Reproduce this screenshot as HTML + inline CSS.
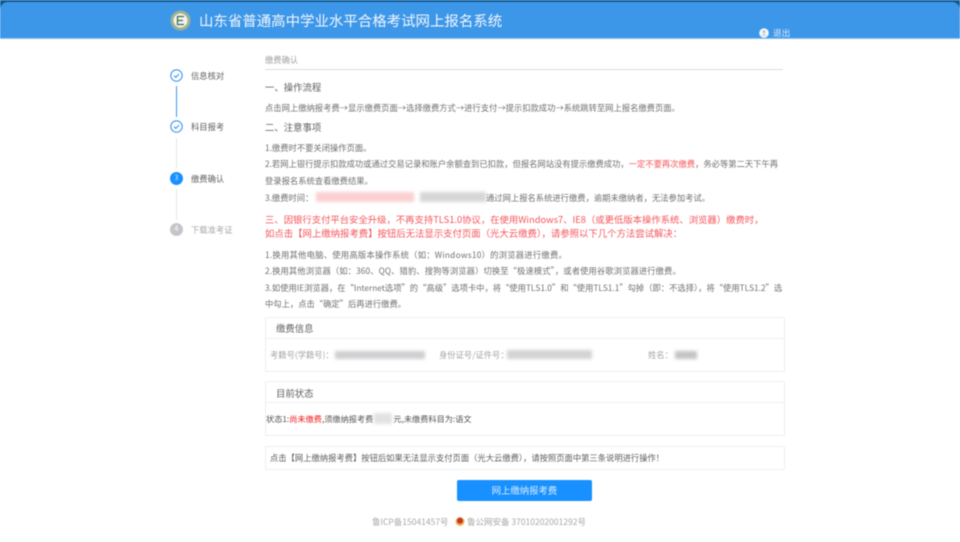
<!DOCTYPE html>
<html lang="zh-CN">
<head>
<meta charset="utf-8">
<title>山东省普通高中学业水平合格考试网上报名系统</title>
<style>
html,body{margin:0;padding:0;background:#fff}
body{width:960px;height:542px;overflow:hidden;position:relative;font-family:"Noto Sans CJK SC","Liberation Sans",sans-serif;color:#666}
#w{position:absolute;inset:0;filter:blur(.4px)}
.t{position:absolute;white-space:nowrap;font-size:8.3px;line-height:12px;color:#707070}
.h{font-size:9.4px;color:#606060}
.r{font-size:9.35px;color:#f4555a}
.box{position:absolute;left:265px;width:518px;background:#fff;border:1px solid #eceef1;border-radius:2px}
.line{position:absolute;left:0;right:0;height:1px;background:#eceef1}
.b{position:absolute;filter:blur(1.6px)}
.c{position:absolute;border-radius:50%;box-sizing:border-box}
</style>
</head>
<body>
<div id="w">
<div style="position:absolute;left:0;top:0;width:960px;height:39px;background:#0f5b96"></div>
<div style="position:absolute;left:0;top:2px;width:960px;height:36px;background:#3d97e9;border-radius:8px 8px 0 0"></div>
<div style="position:absolute;left:0;top:38px;width:960px;height:1px;background:#8fc2f0"></div>

<svg style="position:absolute;left:170px;top:10px" width="21" height="21" viewBox="0 0 21 21">
<circle cx="10.5" cy="10.5" r="10" fill="#9fb08f"/><circle cx="10.5" cy="10.5" r="7" fill="#f3f3ee"/>
<path d="M14 6.5H7.5v8H14M7.5 10.5H13" fill="none" stroke="#3f6d5a" stroke-width="1.3"/>
</svg>
<div class="t" style="left:199px;top:11px;font-size:14.45px;line-height:20px;color:#f2f7fd">山东省普通高中学业水平合格考试网上报名系统</div>

<svg style="position:absolute;left:759px;top:28px" width="10" height="10" viewBox="0 0 10 10">
<circle cx="5" cy="5" r="4.8" fill="#f4f8fd"/><circle cx="5" cy="3.8" r="1.6" fill="#bcc6d0"/><path d="M2.3 7.6c.4-1.7 5-1.7 5.4 0z" fill="#bcc6d0"/>
</svg>
<div class="t" style="left:773px;top:27px;font-size:8.6px;color:#dcebfa">退出</div>

<!-- steps -->
<div style="position:absolute;left:176px;top:86px;width:1px;height:31px;background:#3d97f0"></div>
<div style="position:absolute;left:176px;top:138px;width:1px;height:31px;background:#e6e8ec"></div>
<div style="position:absolute;left:176px;top:189px;width:1px;height:31px;background:#e6e8ec"></div>

<svg style="position:absolute;left:170px;top:69px" width="13" height="13" viewBox="0 0 13 13"><circle cx="6.5" cy="6.5" r="5.7" fill="#fff" stroke="#3d97f0" stroke-width="1.1"/><path d="M4 6.6l1.8 1.8L9 5" fill="none" stroke="#3d97f0" stroke-width="1.1"/></svg>
<div class="t" style="left:191px;top:70px;color:#606060">信息核对</div>

<svg style="position:absolute;left:170px;top:120px" width="13" height="13" viewBox="0 0 13 13"><circle cx="6.5" cy="6.5" r="5.7" fill="#fff" stroke="#3d97f0" stroke-width="1.1"/><path d="M4 6.6l1.8 1.8L9 5" fill="none" stroke="#3d97f0" stroke-width="1.1"/></svg>
<div class="t" style="left:191px;top:121px;color:#606060">科目报考</div>

<div class="c" style="left:170px;top:172px;width:13px;height:13px;background:#1890ff;color:#d5e9ff;font-size:7px;line-height:13px;text-align:center">3</div>
<div class="t" style="left:191px;top:173px;color:#606060">缴费确认</div>

<div class="c" style="left:170px;top:223px;width:13px;height:13px;background:#c4c6c9;color:#fff;font-size:7px;line-height:13px;text-align:center">4</div>
<div class="t" style="left:191px;top:224px;color:#a8a8a8">下载准考证</div>

<!-- content -->
<div class="t" style="left:265px;top:54px;color:#a0a0a0">缴费确认</div>
<div style="position:absolute;left:265px;top:69px;width:518px;height:1px;background:#dcdcdc"></div>

<div class="t h" style="left:265px;top:81px">一、操作流程</div>
<div class="t" style="left:265px;top:102px">点击网上缴纳报考费→显示缴费页面→选择缴费方式→进行支付→提示扣款成功→系统跳转至网上报名缴费页面。</div>
<div class="t h" style="left:265px;top:121px">二、注意事项</div>
<div class="t" style="left:265px;top:142px">1.缴费时不要关闭操作页面。</div>
<div class="t" style="left:265px;top:158px">2.若网上银行提示扣款成功或通过交易记录和账户余额查到已扣款，但报名网站没有提示缴费成功，<span style="color:#f4555a">一定不要再次缴费</span>，务必等第二天下午再</div>
<div class="t" style="left:265px;top:175px">登录报名系统查看缴费结果。</div>
<div class="t" style="left:265px;top:192px">3.缴费时间：</div>
<div class="b" style="left:316px;top:192px;width:98px;height:10px;background:#fbd0d2"></div>
<div class="b" style="left:420px;top:192px;width:66px;height:10px;background:#d6d6d8"></div>
<div class="t" style="left:486px;top:192px">通过网上报名系统进行缴费，逾期未缴纳者，无法参加考试。</div>

<div class="t r" style="left:265px;top:213px">三、因银行支付平台安全升级，不再支持TLS1.0协议，在使用Windows7、IE8（或更低版本操作系统、浏览器）缴费时，</div>
<div class="t r" style="left:265px;top:227px;font-size:9.4px">如点击【网上缴纳报考费】按钮后无法显示支付页面（光大云缴费），请参照以下几个方法尝试解决：</div>

<div class="t" style="left:265px;top:249px;letter-spacing:.25px">1.换用其他电脑、使用高版本操作系统（如：Windows10）的浏览器进行缴费。</div>
<div class="t" style="left:265px;top:265px;letter-spacing:.1px">2.换用其他浏览器（如：360、QQ、猎豹、搜狗等浏览器）切换至“极速模式”，或者使用谷歌浏览器进行缴费。</div>
<div class="t" style="left:265px;top:282px">3.如使用IE浏览器，在“Internet选项”的“高级”选项卡中，将“使用TLS1.0”和“使用TLS1.1”勾掉（即：不选择），将“使用TLS1.2”选</div>
<div class="t" style="left:265px;top:298px">中勾上，点击“确定”后再进行缴费。</div>

<!-- info box -->
<div class="box" style="top:317px;height:53px">
<div class="line" style="top:20px"></div>
<div class="t h" style="left:10px;top:4px">缴费信息</div>
<div class="t" style="left:4px;top:31px;color:#a5a5a5">考籍号(学籍号)：</div>
<div class="b" style="left:69px;top:33px;width:90px;height:8px;background:#cfcfd1"></div>
<div class="t" style="left:173px;top:31px;color:#a5a5a5">身份证号/证件号：</div>
<div class="b" style="left:241px;top:32px;width:85px;height:9px;background:#d3d3d5"></div>
<div class="t" style="left:382px;top:31px;color:#a5a5a5">姓名：</div>
<div class="b" style="left:409px;top:33px;width:22px;height:8px;background:#c4c4c6"></div>
</div>

<!-- status box -->
<div class="box" style="top:381px;height:53px">
<div class="line" style="top:20px"></div>
<div class="t" style="left:0;top:31px;color:#555;font-size:8.2px">状态1:<span style="color:#f01c1c">尚未缴费</span>,须缴纳报考费<span style="display:inline-block;width:20px"></span>元,未缴费科目为:语文</div>
<div class="t h" style="left:10px;top:5px">目前状态</div>
<div class="b" style="left:108px;top:31px;width:18px;height:11px;background:#e2e2e4"></div>
</div>

<!-- notice -->
<div class="box" style="top:446px;height:22px">
<div class="t" style="left:4px;top:5px;color:#606060">点击【网上缴纳报考费】按钮后如果无法显示支付页面（光大云缴费），请按照页面中第三条说明进行操作！</div>
</div>

<div style="position:absolute;left:457px;top:480px;width:135px;height:21px;background:#1890ff;border-radius:2px;color:#d9ecff;font-size:9.4px;line-height:21px;text-align:center">网上缴纳报考费</div>

<div class="t" style="left:372px;top:516px;color:#a8a8a8;font-size:8.5px">鲁ICP备15041457号</div>
<svg style="position:absolute;left:455px;top:516px" width="10" height="11" viewBox="0 0 10 11"><circle cx="5" cy="5.5" r="4.5" fill="#e9b94f"/><circle cx="5" cy="4.8" r="3" fill="#c8352b"/></svg>
<div class="t" style="left:467px;top:516px;color:#a8a8a8;font-size:8.5px">鲁公网安备 37010202001292号</div>
</div>
</body>
</html>
